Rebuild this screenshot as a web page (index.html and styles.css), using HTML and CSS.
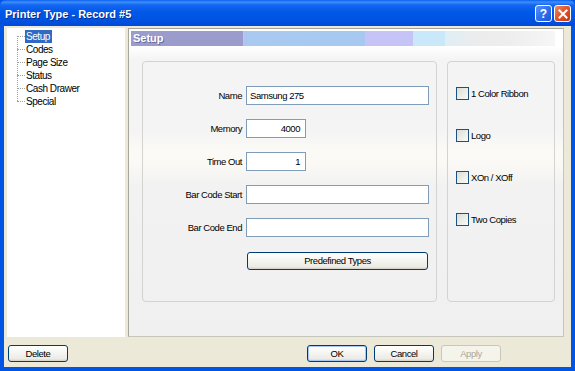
FILE: index.html
```html
<!DOCTYPE html>
<html>
<head>
<meta charset="utf-8">
<title>Printer Type - Record #5</title>
<link rel="stylesheet" href="styles.css">
</head>
<body>
<div class="window">
  <div class="titlebar">
    <span class="title">Printer Type - Record #5</span>
    <div class="tb-buttons">
      <div class="tb-btn help">?</div>
      <div class="tb-btn close">
        <svg width="10" height="10" viewBox="0 0 10 10"><path d="M1.5 1.5 L8.5 8.5 M8.5 1.5 L1.5 8.5" stroke="#fff" stroke-width="2" stroke-linecap="square"/></svg>
      </div>
    </div>
  </div>
  <div class="client">
    <div class="main">
      <div class="tree">
        <ul class="tree-list">
          <li><span class="node selected">Setup</span></li>
          <li><span class="node">Codes</span></li>
          <li><span class="node">Page Size</span></li>
          <li><span class="node">Status</span></li>
          <li><span class="node">Cash Drawer</span></li>
          <li><span class="node">Special</span></li>
        </ul>
      </div>
      <div class="panel">
        <div class="banner">
          <span class="banner-text">Setup</span>
          <div class="seg s1"></div>
          <div class="seg s2"></div>
          <div class="seg s3"></div>
          <div class="seg s4"></div>
          <div class="seg s5"></div>
        </div>
        <div class="panel-body">
          <div class="group fields">
            <div class="row"><label class="lbl">Name</label><div class="input wide">Samsung 275</div></div>
            <div class="row"><label class="lbl">Memory</label><div class="input short num">4000</div></div>
            <div class="row"><label class="lbl">Time Out</label><div class="input short num">1</div></div>
            <div class="row"><label class="lbl">Bar Code Start</label><div class="input wide"></div></div>
            <div class="row"><label class="lbl">Bar Code End</label><div class="input wide"></div></div>
            <div class="row"><span class="lbl"></span><div class="xpbtn predefined">Predefined Types</div></div>
          </div>
          <div class="group checks">
            <div class="check"><span class="box"></span><span>1 Color Ribbon</span></div>
            <div class="check"><span class="box"></span><span>Logo</span></div>
            <div class="check"><span class="box"></span><span>XOn / XOff</span></div>
            <div class="check"><span class="box"></span><span>Two Copies</span></div>
          </div>
        </div>
      </div>
    </div>
    <div class="footer">
      <div class="xpbtn fbtn">Delete</div>
      <div class="footer-right">
        <div class="xpbtn fbtn ok">OK</div>
        <div class="xpbtn fbtn">Cancel</div>
        <div class="xpbtn fbtn disabled">Apply</div>
      </div>
    </div>
  </div>
</div>
</body>
</html>
```

FILE: styles.css
```css
html, body {
  margin: 0;
  padding: 0;
  background: #ffffff;
}

.window {
  width: 575px;
  height: 371px;
  box-sizing: border-box;
  display: flex;
  flex-direction: column;
  background: #0055e5;
  font-family: "Liberation Sans", Arial, sans-serif;
  font-size: 9.5px;
  letter-spacing: -0.45px;
  color: #000;
}

.titlebar {
  height: 26px;
  flex: none;
  display: flex;
  align-items: center;
  justify-content: space-between;
  padding: 0 4px 0 5px;
  background: linear-gradient(to bottom, #0a5ff0 0, #3d8ff9 2px, #1466f2 5px, #0058e8 12px, #0053e2 20px, #0049d6 26px);
  border-radius: 6px 6px 0 0;
}

.title {
  font-family: "Liberation Sans", Arial, sans-serif;
  font-weight: bold;
  font-size: 11px;
  letter-spacing: 0;
  color: #fff;
  text-shadow: 1px 1px 0 #0a2a8a;
  margin-top: 1px;
}

.tb-buttons {
  display: flex;
  gap: 2px;
  margin-top: 1px;
}

.tb-btn {
  width: 15px;
  height: 15px;
  border: 1px solid #fff;
  border-radius: 3px;
  display: flex;
  align-items: center;
  justify-content: center;
  color: #fff;
  font-family: "Liberation Sans", Arial, sans-serif;
  font-weight: bold;
  font-size: 12px;
  letter-spacing: 0;
}

.help {
  background: linear-gradient(135deg, #5a93f8 0, #2f6ff0 50%, #1d55d8 100%);
}

.close {
  background: linear-gradient(135deg, #f08a6a 0, #e2562c 45%, #c63a12 100%);
}

.client {
  flex: 1;
  margin: 0 4px 4px 4px;
  background: #ece9d8;
  display: flex;
  flex-direction: column;
  padding: 2px 7px 0 3px;
}

.main {
  height: 309px;
  display: flex;
  gap: 3px;
}

.tree {
  width: 119px;
  background: #fff;
  padding-top: 2px;
  box-sizing: border-box;
}

.tree-list {
  list-style: none;
  margin: 0 0 0 10px;
  padding: 0;
  position: relative;
}

.tree-list::before {
  content: "";
  position: absolute;
  left: 0;
  top: 6px;
  height: 65px;
  border-left: 1px dotted #a0a0a0;
}

.tree-list li {
  height: 13px;
  display: flex;
  align-items: center;
  padding-left: 8px;
  position: relative;
}

.tree-list li::before {
  content: "";
  position: absolute;
  left: 0;
  top: 6px;
  width: 8px;
  border-top: 1px dotted #a0a0a0;
}

.node {
  padding: 0 2px 0 1px;
  line-height: 13px;
  font-size: 10px;
}

.node.selected {
  background: #316ac5;
  color: #fff;
}

.panel {
  flex: 1;
  border: 1px solid #a7a69c;
  border-right-color: #c6c5bc;
  border-bottom-color: #c6c5bc;
  background: #fff;
  display: flex;
  flex-direction: column;
  padding: 2px 8px 0 2px;
}

.banner {
  height: 15px;
  display: flex;
  position: relative;
}

.banner-text {
  position: absolute;
  left: 2px;
  top: 0;
  line-height: 15px;
  font-family: "Liberation Sans", Arial, sans-serif;
  font-weight: bold;
  font-size: 11px;
  letter-spacing: 0;
  color: #fff;
  text-shadow: 1px 1px 0 #6b6ba0;
}

.seg { height: 15px; }
.s1 { width: 112px; background: #9b9bcc; }
.s2 { width: 121px; background: linear-gradient(to right, #b0c4ee 0, #a9c9f0 4px, #a6c8f1 100%); border-left: 1px solid #bcc8e8; }
.s3 { width: 48px; background: #c6c4f6; }
.s4 { width: 32px; background: #c9e8fa; }
.s5 { flex: 1; background: linear-gradient(to right, #dfeef5 0, #ececec 30%, #eeeeee 60%, #f6f6f6 100%); }

.panel-body {
  flex: 1;
  display: flex;
  gap: 10px;
  padding: 15px 8px 34px 13px;
  margin: 0 -8px 0 -2px;
  background: linear-gradient(to bottom, #ffffff 0, #f4f4f4 14px, #f4f4f4 85px, #fbfaf6 105px, #faf9f6 118px, #f2f2f2 140px, #f0f0f0 100%);
}

.group {
  border: 1px solid #d3d3d0;
  border-radius: 4px;
  box-sizing: border-box;
}

.fields {
  width: 295px;
  display: flex;
  flex-direction: column;
  gap: 14px;
  padding-top: 24px;
}

.row {
  display: flex;
  align-items: center;
  height: 19px;
}

.lbl {
  width: 99px;
  text-align: right;
  padding-right: 4px;
  flex: none;
}

.input {
  height: 19px;
  box-sizing: border-box;
  border: 1px solid #7f9db9;
  background: #fff;
  line-height: 17px;
  padding: 0 3px;
}

.input.wide { width: 183px; }
.input.short { width: 60px; }
.input.num { text-align: right; padding-right: 5px; }

.xpbtn {
  box-sizing: border-box;
  border: 1px solid #003c74;
  border-radius: 3px;
  background: linear-gradient(to bottom, #ffffff 0, #f6f6f2 40%, #ecebe6 85%, #d6d0c5 100%);
  text-align: center;
}

.predefined {
  width: 181px;
  height: 18px;
  line-height: 16px;
  margin-left: 1px;
}

.checks {
  width: 108px;
  display: flex;
  flex-direction: column;
  gap: 29px;
  padding: 25px 0 0 8px;
}

.check {
  display: flex;
  align-items: center;
  gap: 2px;
  height: 13px;
}

.box {
  width: 11px;
  height: 11px;
  border: 1px solid #1c5180;
  background: linear-gradient(135deg, #dcdcd7 0, #f0f0ea 60%, #fbfbf8 100%);
  flex: none;
}

.footer {
  flex: 1;
  display: flex;
  justify-content: space-between;
  align-items: flex-start;
  padding: 8px 0 0 1px;
}

.footer-right {
  display: flex;
  gap: 7px;
  margin-right: 63px;
}

.fbtn {
  width: 60px;
  height: 17px;
  line-height: 15px;
}

.fbtn.ok {
  box-shadow: inset 0 0 0 1px #a9c6f5;
}

.fbtn.disabled {
  border-color: #c9c7ba;
  background: #f5f4ea;
  color: #aca899;
}
```
